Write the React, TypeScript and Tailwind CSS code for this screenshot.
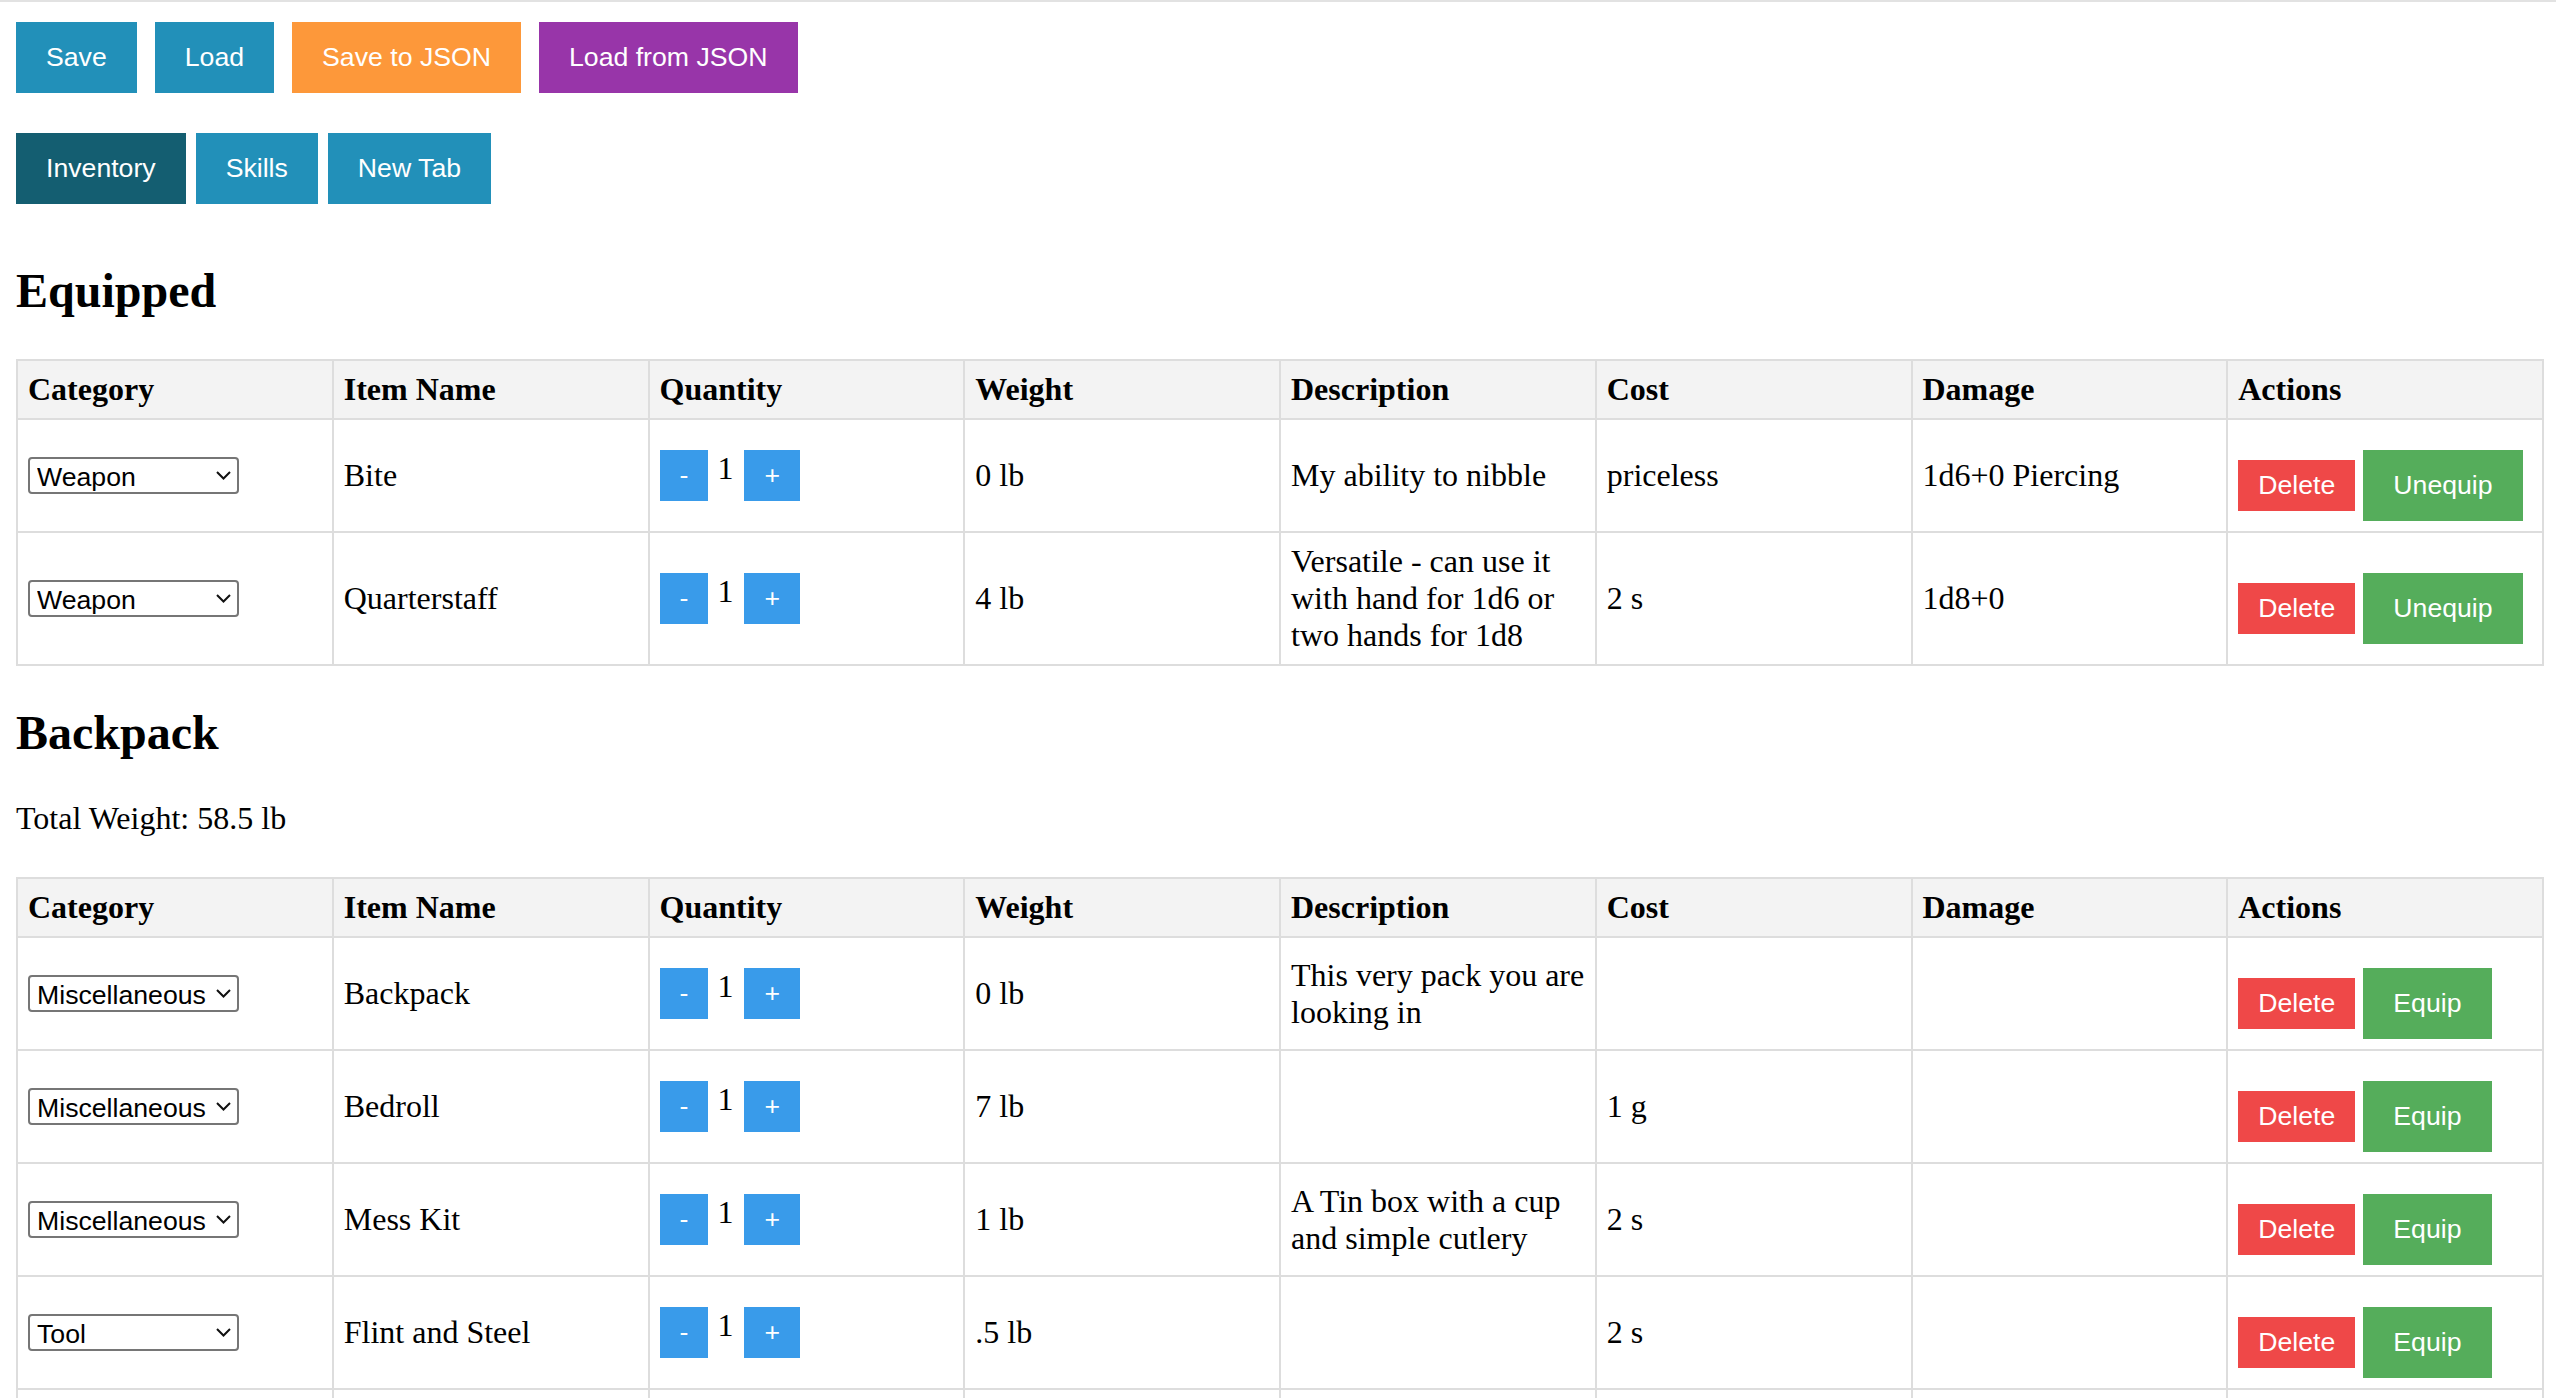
import { useState } from "react";

type Item = {
  category: string;
  name: string;
  quantity: number;
  weight: string;
  description: string;
  cost: string;
  damage: string;
};

const equippedItems: Item[] = [
  { category: "Weapon", name: "Bite", quantity: 1, weight: "0 lb", description: "My ability to nibble", cost: "priceless", damage: "1d6+0 Piercing" },
  {
    category: "Weapon",
    name: "Quarterstaff",
    quantity: 1,
    weight: "4 lb",
    description: "Versatile - can use it with hand for 1d6 or two hands for 1d8",
    cost: "2 s",
    damage: "1d8+0",
  },
];

const backpackItems: Item[] = [
  { category: "Miscellaneous", name: "Backpack", quantity: 1, weight: "0 lb", description: "This very pack you are looking in", cost: "", damage: "" },
  { category: "Miscellaneous", name: "Bedroll", quantity: 1, weight: "7 lb", description: "", cost: "1 g", damage: "" },
  { category: "Miscellaneous", name: "Mess Kit", quantity: 1, weight: "1 lb", description: "A Tin box with a cup and simple cutlery", cost: "2 s", damage: "" },
  { category: "Tool", name: "Flint and Steel", quantity: 1, weight: ".5 lb", description: "", cost: "2 s", damage: "" },
];

const categories = ["Weapon", "Armor", "Tool", "Miscellaneous"];

const headers = ["Category", "Item Name", "Quantity", "Weight", "Description", "Cost", "Damage", "Actions"];

const sans = "font-['Liberation_Sans',Arial,sans-serif]";

const CategorySelect = ({ value }: { value: string }) => (
  <div className="relative w-[211px]">
    <select
      defaultValue={value}
      className={`${sans} h-[37px] w-[211px] appearance-none rounded-[4px] border-2 border-[#767676] bg-white pl-[7px] text-[26.67px] text-black`}
    >
      {categories.map((c) => (
        <option key={c} value={c}>
          {c}
        </option>
      ))}
    </select>
    <svg
      className="pointer-events-none absolute right-[8px] top-[14px]"
      width="15"
      height="9"
      viewBox="0 0 15 9"
      fill="none"
    >
      <polyline points="1,1 7.5,7.5 14,1" stroke="#111" strokeWidth="2" />
    </svg>
  </div>
);

const ItemTable = ({ items, equipped, trailingRow }: { items: Item[]; equipped: boolean; trailingRow?: boolean }) => (
  <table className="w-full table-fixed border-collapse text-[32px] leading-[37px]">
    <thead>
      <tr>
        {headers.map((h) => (
          <th key={h} className="border-2 border-[#dddddd] bg-[#f3f3f3] p-[10px] text-left align-middle font-bold">
            {h}
          </th>
        ))}
      </tr>
    </thead>
    <tbody>
      {items.map((item, i) => (
        <tr key={i}>
          <td className="border-2 border-[#dddddd] p-[10px] align-middle">
            <CategorySelect value={item.category} />
          </td>
          <td className="border-2 border-[#dddddd] p-[10px] align-middle">{item.name}</td>
          <td className="border-2 border-[#dddddd] p-[10px] align-middle">
            <div className="flex items-start">
              <button className={`${sans} bg-[#399bea] px-[20px] py-[10px] text-[26.67px] leading-[31px] text-white`}>-</button>
              <span className="ml-[9px] mr-[11px] leading-[37px]">{item.quantity}</span>
              <button className={`${sans} bg-[#399bea] px-[20px] py-[10px] text-[26.67px] leading-[31px] text-white`}>+</button>
            </div>
          </td>
          <td className="border-2 border-[#dddddd] p-[10px] align-middle">{item.weight}</td>
          <td className="border-2 border-[#dddddd] py-[10px] pl-[10px] pr-[6px] align-middle">{item.description}</td>
          <td className="border-2 border-[#dddddd] p-[10px] align-middle">{item.cost}</td>
          <td className="border-2 border-[#dddddd] p-[10px] align-middle">{item.damage}</td>
          <td className="border-2 border-[#dddddd] p-[10px] align-middle">
            <div className={`${sans} flex items-center gap-[8px] pt-[20px] text-[26.67px] leading-[31px] text-white`}>
              <button className="bg-[#ef4848] px-[20px] py-[10px]">Delete</button>
              <button className="bg-[#55ad5b] px-[30px] py-[20px]">{equipped ? "Unequip" : "Equip"}</button>
            </div>
          </td>
        </tr>
      ))}
      {trailingRow && (
        <tr>
          {headers.map((h) => (
            <td key={h} className="h-[111px] border-2 border-[#dddddd] p-[10px]" />
          ))}
        </tr>
      )}
    </tbody>
  </table>
);

const App = () => {
  const [tab, setTab] = useState("Inventory");
  const tabs = ["Inventory", "Skills", "New Tab"];

  return (
    <div className="min-h-screen bg-white font-['Liberation_Serif','Times_New_Roman',serif] text-black">
      <div className="h-[2px] bg-[#e2e2e2]" />
      <div className="pl-[16px] pr-[12px]">
        <div className={`${sans} mt-[20px] flex gap-[18px] text-[26.67px] leading-[31px] text-white`}>
          <button className="bg-[#2290b9] px-[30px] py-[20px]">Save</button>
          <button className="bg-[#2290b9] px-[30px] py-[20px]">Load</button>
          <button className="bg-[#fd983a] px-[30px] py-[20px]">Save to JSON</button>
          <button className="bg-[#9835a9] px-[30px] py-[20px]">Load from JSON</button>
        </div>

        <div className={`${sans} mt-[40px] flex gap-[10px] text-[26.67px] leading-[31px] text-white`}>
          {tabs.map((t) => (
            <button
              key={t}
              onClick={() => setTab(t)}
              className={t === tab ? "bg-[#145e71] px-[30px] py-[20px]" : "bg-[#2290b9] px-[30px] py-[20px]"}
            >
              {t}
            </button>
          ))}
        </div>

        <h2 className="mt-[59px] mb-[41px] text-[48px] leading-[55px] font-bold">Equipped</h2>
        <ItemTable items={equippedItems} equipped />

        <h2 className="mt-[39px] text-[48px] leading-[55px] font-bold">Backpack</h2>
        <p className="mt-[40px] text-[32px] leading-[37px]">Total Weight: 58.5 lb</p>
        <div className="mt-[40px]">
          <ItemTable items={backpackItems} equipped={false} trailingRow />
        </div>
      </div>
    </div>
  );
};

export default App;
